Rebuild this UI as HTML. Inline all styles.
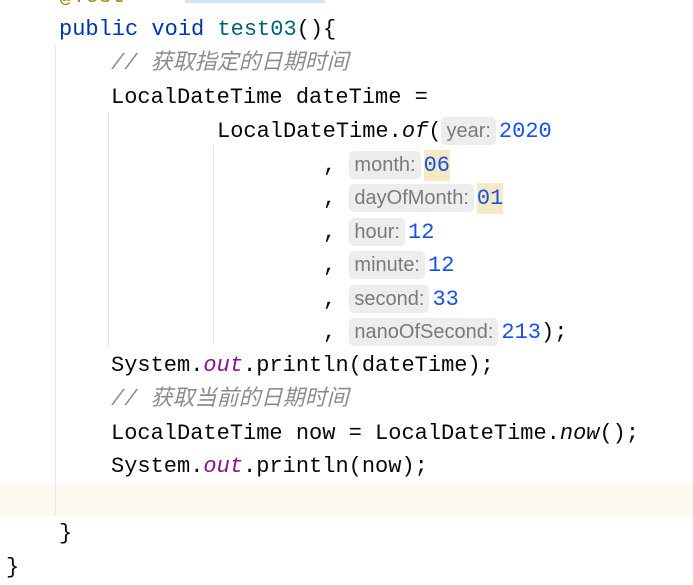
<!DOCTYPE html>
<html><head><meta charset="utf-8"><style>
body{margin:0;width:693px;height:579px;background:#fff;overflow:hidden;position:relative;font-family:"Liberation Mono","Noto Sans CJK SC",monospace;font-size:22px;color:#080808}
.l{position:absolute;white-space:pre;height:34px;line-height:34px}
.k{color:#0033b3}.m{color:#00627a}.c{color:#8c8c8c;font-style:italic;font-family:"Liberation Mono","Noto Sans CJK SC",monospace}
.n{color:#1750eb}.o{color:#871094;font-style:italic}.i{font-style:italic}
.h{font-family:"Liberation Sans",sans-serif;font-size:20px;color:#7a7a7a;background:#ededed;border-radius:5px;padding:3px 5px;margin-right:3px}
.y{background:#f7e9c2;padding:3px 0}
.g{position:absolute;width:1px;background:#e6e6e6}
</style></head><body>
<div style="position:absolute;left:185px;top:0;width:140px;height:3px;background:#cfe4fb"></div>
<div class="l c" style="left:59px;top:-20px;color:#9e880d;font-style:normal">@Test</div>
<div style="position:absolute;left:0;top:483px;width:693px;height:33px;background:#fdfbf1"></div>
<div class="g" style="left:55px;top:45px;height:470px"></div>
<div class="g" style="left:108px;top:112px;height:234px"></div>
<div class="g" style="left:213px;top:145px;height:200px"></div>
<div class="l" style="left:59px;top:13px"><span class="k">public void </span><span class="m">test03</span>(){</div>
<div class="l c" style="left:111px;top:47px">// 获取指定的日期时间</div>
<div class="l" style="left:111px;top:81px">LocalDateTime dateTime =</div>
<div class="l" style="left:217px;top:114px">LocalDateTime.<span class="i">of</span>(<span class="h">year:</span><span class="n">2020</span></div>
<div class="l" style="left:323px;top:148px">, <span class="h">month:</span><span class="n y">06</span></div>
<div class="l" style="left:323px;top:181px">, <span class="h">dayOfMonth:</span><span class="n y">01</span></div>
<div class="l" style="left:323px;top:215px">, <span class="h">hour:</span><span class="n">12</span></div>
<div class="l" style="left:323px;top:248px">, <span class="h">minute:</span><span class="n">12</span></div>
<div class="l" style="left:323px;top:282px">, <span class="h">second:</span><span class="n">33</span></div>
<div class="l" style="left:323px;top:315px">, <span class="h">nanoOfSecond:</span><span class="n">213</span>);</div>
<div class="l" style="left:111px;top:349px">System.<span class="o">out</span>.println(dateTime);</div>
<div class="l c" style="left:111px;top:383px">// 获取当前的日期时间</div>
<div class="l" style="left:111px;top:417px">LocalDateTime now = LocalDateTime.<span class="i">now</span>();</div>
<div class="l" style="left:111px;top:450px">System.<span class="o">out</span>.println(now);</div>
<div class="l" style="left:59px;top:517px">}</div>
<div class="l" style="left:6px;top:551px">}</div>
</body></html>
